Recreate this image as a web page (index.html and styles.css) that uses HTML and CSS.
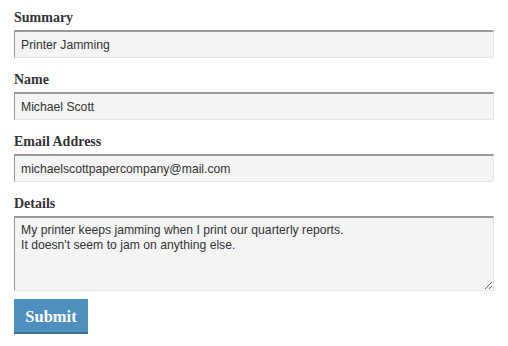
FILE: index.html
```html
<!DOCTYPE html>
<html lang="en">
<head>
<meta charset="utf-8">
<title>Support Request</title>
<link rel="stylesheet" href="styles.css">
</head>
<body>
<form class="form">
  <div class="field">
    <label class="label" for="summary">Summary</label>
    <input class="input" id="summary" type="text" value="Printer Jamming">
  </div>
  <div class="field">
    <label class="label" for="name">Name</label>
    <input class="input" id="name" type="text" value="Michael Scott">
  </div>
  <div class="field">
    <label class="label" for="email">Email Address</label>
    <input class="input" id="email" type="text" value="michaelscottpapercompany@mail.com">
  </div>
  <div class="field field-last">
    <label class="label" for="details">Details</label>
    <textarea class="input textarea" id="details">My printer keeps jamming when I print our quarterly reports.
It doesn't seem to jam on anything else.</textarea>
  </div>
  <button class="submit" type="button">Submit</button>
</form>
</body>
</html>
```

FILE: styles.css
```css
html, body {
  margin: 0;
  padding: 0;
  background: #ffffff;
}

.form {
  padding: 9px 14px 0 14px;
  display: flex;
  flex-direction: column;
  align-items: flex-start;
}

.field {
  display: flex;
  flex-direction: column;
  width: 480px;
  margin-bottom: 13px;
}

.field-last {
  margin-bottom: 8px;
}

.label {
  font-family: "Liberation Serif", "Times New Roman", serif;
  font-weight: bold;
  font-size: 14px;
  line-height: 17px;
  height: 17px;
  color: #333333;
  margin-bottom: 4px;
}

.input {
  box-sizing: border-box;
  width: 480px;
  height: 28px;
  margin: 0;
  padding: 0 6px;
  font-family: "Liberation Sans", Arial, sans-serif;
  font-size: 12.2px;
  color: #333333;
  background: #f4f4f4;
  border-style: solid;
  border-width: 1px;
  border-color: #999999 #e6e6e6 #e6e6e6 #999999;
  border-top-width: 2px;
  border-radius: 0;
  outline: none;
}

.textarea {
  height: 75px;
  padding: 5px 6px;
  line-height: 15px;
  resize: both;
  display: block;
}

.submit {
  box-sizing: border-box;
  width: 74px;
  height: 35px;
  margin: 0;
  padding: 2px 0 0 0;
  font-family: "Liberation Serif", "Times New Roman", serif;
  font-weight: bold;
  font-size: 16.5px;
  color: #ffffff;
  background: #4f8fbf;
  border: none;
  border-bottom: 2px solid #3c6f94;
  border-radius: 0;
  cursor: pointer;
}
```
